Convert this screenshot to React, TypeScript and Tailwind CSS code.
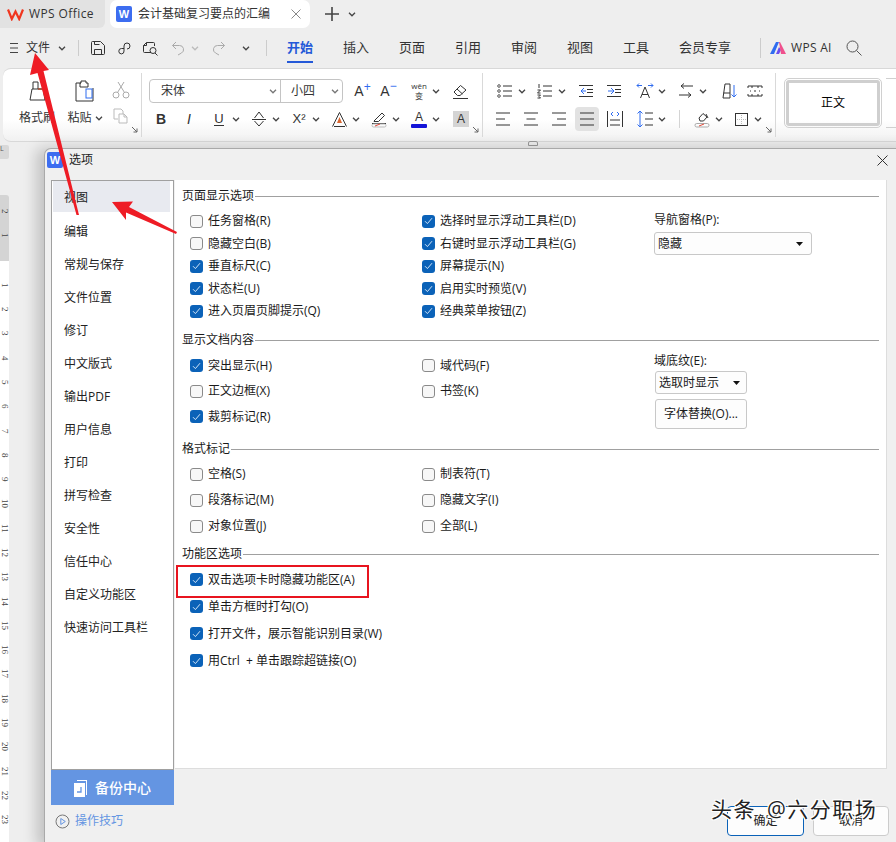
import React from "react";

const FONT = "font-['Open_Sans','Noto_Sans_CJK_SC',sans-serif]";

function Ic({ children, s = 20, vb = 20, c = "#333" }: { children: React.ReactNode; s?: number; vb?: number; c?: string }) {
  return (
    <svg width={s} height={s} viewBox={`0 0 ${vb} ${vb}`} fill="none" stroke={c} strokeWidth={1} className="shrink-0">
      {children}
    </svg>
  );
}

function Chev({ c = "#444" }: { c?: string }) {
  return (
    <svg width="8" height="5" viewBox="0 0 8 5" fill="none" stroke={c} strokeWidth={1.3} className="shrink-0">
      <path d="M1 .8 4 3.8 7 .8" />
    </svg>
  );
}

function Launcher() {
  return (
    <svg width="7" height="7" viewBox="0 0 7 7" fill="none" stroke="#666" className="absolute right-[3px] bottom-[4px]">
      <path d="M1 1 6 6M6 2.5V6H2.5" />
    </svg>
  );
}

function Slot({ children, className = "w-[24px]" }: { children: React.ReactNode; className?: string }) {
  return <div className={`h-[24px] flex items-center justify-center shrink-0 ${className}`}>{children}</div>;
}

function Drop({ children, className = "" }: { children: React.ReactNode; className?: string }) {
  return (
    <div className={`h-[24px] w-[34px] flex items-center shrink-0 ${className}`}>
      <div className="w-[24px] flex justify-center">{children}</div>
      <div className="w-[10px] flex justify-center"><Chev /></div>
    </div>
  );
}

const L = ({ d, c = "#333" }: { d: string; c?: string }) => <path d={d} stroke={c} />;

const AlignIcon = ({ d }: { d: string }) => <Ic s={18} vb={18}><L d={d} /></Ic>;

function Tab({ label, active = false, className = "" }: { label: string; active?: boolean; className?: string }) {
  return (
    <div className={`relative h-[28px] flex items-center justify-center text-[13px] ${active ? "text-[#2459d8] font-semibold" : "text-[#333]"} ${className}`}>
      {label}
      {active && <div className="absolute left-[15px] right-[15px] bottom-[-1px] h-[2px] bg-[#2459d8]" />}
    </div>
  );
}

function Check({ on, label }: { on: boolean; label: string }) {
  return (
    <div className="flex items-center h-full">
      {on ? (
        <div className="w-[13px] h-[13px] rounded-[3px] bg-[#0b62b8] flex items-center justify-center shrink-0">
          <svg width="9" height="8" viewBox="0 0 9 8" fill="none" stroke="#cfe3f7" strokeWidth={1}><path d="M1 4.2 3.4 6.6 8 1.2" /></svg>
        </div>
      ) : (
        <div className="w-[13px] h-[13px] rounded-[3px] bg-[#f7f7f7] border border-[#8a8a8a] shrink-0" />
      )}
      <span className="ml-[5px] text-[12px] text-[#1a1a1a] whitespace-nowrap leading-none">{label}</span>
    </div>
  );
}

function Heading({ title }: { title: string }) {
  return (
    <div className="flex items-center h-[16px] pl-[7px] pr-[7px]">
      <span className="text-[12px] text-[#1a1a1a] leading-none whitespace-nowrap">{title}</span>
      <div className="flex-1 h-px bg-[#a0a0a0] ml-[1px]" />
    </div>
  );
}

const SIDE = ["视图", "编辑", "常规与保存", "文件位置", "修订", "中文版式", "输出PDF", "用户信息", "打印", "拼写检查", "安全性", "信任中心", "自定义功能区", "快速访问工具栏"];

function Ruler() {
  const nums = Array.from({ length: 23 }, (_, i) => i + 1);
  return (
    <div className="w-[9px] h-full flex flex-col shrink-0">
      <div className="h-[14px] mt-[3px] bg-[#d8d8d8] rounded-r-[2px] text-[7px] text-[#555] leading-none">L</div>
      <div className="h-[36px]" />
      <div className="h-[66px] bg-[#d4d4d4] rounded-tr-[3px] flex flex-col items-center pt-[14px] gap-[19px] text-[9px] text-[#444] font-['Liberation_Serif',serif]">
        <span className="leading-none [writing-mode:vertical-rl]">2</span>
        <span className="leading-none [writing-mode:vertical-rl]">1</span>
      </div>
      <div className="flex-1 bg-white pt-[12px] overflow-hidden">
        {nums.map((n) => (
          <div key={n} className="h-[24.3px] flex justify-center text-[9px] text-[#444] font-['Liberation_Serif',serif] leading-none [writing-mode:vertical-rl]">
            {n}
          </div>
        ))}
      </div>
    </div>
  );
}

export default function App() {
  return (
    <div className={`relative w-[896px] h-[842px] overflow-hidden bg-[#eeeeee] flex flex-col ${FONT}`}>
      {/* Title tabs */}
      <div className="h-[28px] flex items-center shrink-0">
        <div className="w-[105px] h-full bg-[#e2e2e2] rounded-br-[6px] flex items-center pl-[7px]">
          <svg width="17" height="13" viewBox="0 0 17 13" fill="none" stroke="#f0361f" strokeWidth={2.2}>
            <path d="M1 1.5 4.8 11 8.5 3.5 12.2 11 16 1.5" />
          </svg>
          <span className="ml-[5px] text-[12px] text-[#333] tracking-[.4px]">WPS Office</span>
        </div>
        <div className="ml-[5px] w-[200px] h-full bg-white rounded-[7px] flex items-center pl-[6px]">
          <div className="w-[16px] h-[16px] rounded-[2px] bg-[#3d6df0] text-white text-[11px] font-bold flex items-center justify-center leading-none font-['Liberation_Sans',sans-serif]">W</div>
          <span className="ml-[6px] text-[12px] text-[#333] whitespace-nowrap">会计基础复习要点的汇编</span>
          <svg width="10" height="10" viewBox="0 0 10 10" stroke="#888" className="ml-[21px]"><path d="M.5.5l9 9M9.5.5l-9 9" /></svg>
        </div>
        <svg width="14" height="14" viewBox="0 0 14 14" stroke="#444" strokeWidth={1.6} className="ml-[15px]"><path d="M7 0v14M0 7h14" /></svg>
        <div className="ml-[9px]"><Chev /></div>
      </div>

      {/* Menu row */}
      <div className="h-[40px] flex items-center shrink-0 text-[#333]">
        <svg width="8" height="10" viewBox="0 0 8 10" stroke="#444" className="ml-[10px]"><path d="M0 .5h8M0 5h8M0 9.5h8" /></svg>
        <span className="ml-[8px] text-[12px]">文件</span>
        <div className="ml-[8px]"><Chev /></div>
        <div className="ml-[12px] w-px h-[16px] bg-[#ccc]" />
        <div className="ml-[11px]">
          <Ic s={16} vb={16}><L d="M1.5 2.5a1 1 0 0 1 1-1h8l4 4v8a1 1 0 0 1-1 1h-11a1 1 0 0 1-1-1zM4.5 14.5v-5h7v5M4.5 1.5v3h5" /></Ic>
        </div>
        <div className="ml-[11px]">
          <Ic s={15} vb={15}><L d="M7 7.5H4.5a2.7 2.7 0 1 0 0 5.4A2.7 2.7 0 0 0 7 10V5a3 3 0 1 1 3 3" /></Ic>
        </div>
        <div className="ml-[10px]">
          <Ic s={17} vb={17}><L d="M9 12.5H2.5a1 1 0 0 1-1-1v-6l3-3h7a1 1 0 0 1 1 1V6M1.5 5.5h3v-3" /><circle cx="11" cy="10.5" r="3" stroke="#333" /><L d="m13 13 2.5 2.5" /></Ic>
        </div>
        <div className="ml-[12px]">
          <Ic s={15} vb={15} c="#aaa"><path d="M5 1 1.5 4.5 5 8M1.5 4.5h7a4 4 0 0 1 2 7.5L7 14" /></Ic>
        </div>
        <div className="ml-[5px]"><Chev c="#bbb" /></div>
        <div className="ml-[12px]">
          <Ic s={15} vb={15} c="#aaa"><path d="M10 1l3.500 3.500L10 8M13.500 4.500h-7a4 4 0 0 0-2 7.500L8 14" /></Ic>
        </div>
        <div className="ml-[16px]"><Chev /></div>
        <div className="ml-[16px] w-px h-[16px] bg-[#ccc]" />
        <div className="ml-[5px] flex">
          <Tab label="开始" active className="w-[56px]" />
          <Tab label="插入" className="w-[56px]" />
          <Tab label="页面" className="w-[56px]" />
          <Tab label="引用" className="w-[56px]" />
          <Tab label="审阅" className="w-[56px]" />
          <Tab label="视图" className="w-[56px]" />
          <Tab label="工具" className="w-[56px]" />
          <Tab label="会员专享" className="w-[82px]" />
        </div>
        <div className="ml-[14px] w-px h-[20px] bg-[#ccc]" />
        <svg width="16" height="12" viewBox="0 0 16 12" className="ml-[9px]">
          <path d="M0 12 6 0h3L4 12z" fill="#2f6cf0" />
          <path d="M6 12l3-7 2 3-2 4z" fill="#6a4cf0" />
          <path d="M9 0h1l6 12h-5z" fill="#f0508c" />
        </svg>
        <span className="ml-[5px] text-[12px] text-[#333] tracking-[.3px] whitespace-nowrap">WPS AI</span>
        <svg width="16" height="16" viewBox="0 0 16 16" fill="none" stroke="#555" className="ml-[14px]"><circle cx="6.500" cy="6.500" r="5.500" /><path d="m10.500 10.500 5 5" /></svg>
      </div>

      {/* Ribbon */}
      <div className="ml-[3px] h-[74px] shrink-0 flex bg-gradient-to-b from-white from-70% to-[#f1f1f1] rounded-tl-[8px] rounded-bl-[8px] border-t border-b border-[#d8d8d8] text-[#333]">
        <div className="relative w-[139px] shrink-0 my-[4px] border-r border-[#d9d9d9] flex text-[12px] leading-none">
          <div className="ml-[16px] w-[36px] flex flex-col items-center pt-[6px]">
            <Ic s={24} vb={24}>
              <L d="M8 3h5v7h5l2 11H5l2-11h1zM8 10h10" />
              <path d="M13 10h6" stroke="#e8562a" />
            </Ic>
            <span className="mt-[9px] whitespace-nowrap">格式刷</span>
          </div>
          <div className="ml-[13px] w-[34px] flex flex-col items-center pt-[6px]">
            <Ic s={24} vb={24}>
              <L d="M8 4H3v18h17V9M8 4V2h5v2h2v4H7V4z" />
              <rect x="13" y="10" width="6" height="9" stroke="#2f6cf0" />
            </Ic>
            <div className="mt-[9px] flex items-center whitespace-nowrap">粘贴<span className="ml-[3px]"><Chev /></span></div>
          </div>
          <div className="ml-[9px] w-[20px] flex flex-col items-center pt-[8px]">
            <Ic s={18} vb={18} c="#aaa"><circle cx="4" cy="14" r="3" /><circle cx="14" cy="14" r="3" /><path d="M5.500 11.500 12 1M12.500 11.500 6 1" /></Ic>
            <div className="mt-[9px]">
              <Ic s={16} vb={16} c="#bbb"><path d="M1 1h7l2 2v3M1 1v10h4M6 6h5l3 3v6H6zM11 6v3h3" /></Ic>
            </div>
          </div>
          <Launcher />
        </div>

        <div className="relative w-[341px] shrink-0 my-[4px] border-r border-[#d9d9d9] pl-[7px] pt-[6px]">
          <div className="flex items-center h-[24px]">
            <div className="w-[194px] h-[24px] rounded-[4px] border border-[#c4c4c4] flex items-center shrink-0 text-[12px]">
              <div className="w-[131px] h-full flex items-center pl-[11px] pr-[3px] justify-between border-r border-[#c4c4c4]">
                <span>宋体</span>
                <Chev c="#777" />
              </div>
              <div className="flex-1 flex items-center pl-[10px] pr-[3px] justify-between">
                <span>小四</span>
                <Chev c="#777" />
              </div>
            </div>
            <Slot className="w-[24px] ml-[4px]"><span className="text-[14px] leading-none relative font-['Liberation_Sans',sans-serif]">A<span className="absolute -right-[7px] -top-[3px] text-[12px] text-[#2f6cf0] leading-none">+</span></span></Slot>
            <Slot className="w-[24px] ml-[2px]"><span className="text-[14px] leading-none relative font-['Liberation_Sans',sans-serif]">A<span className="absolute -right-[7px] -top-[4px] text-[12px] text-[#2f6cf0] leading-none">−</span></span></Slot>
            <Drop className="ml-[10px]"><span className="text-[8px] leading-[10px] text-center">wěn<br />变</span></Drop>
            <Slot className="w-[24px] ml-[7px]">
              <Ic s={17} vb={17}><L d="M2 9 8.500 2.500 14 7 8 12.500H5.500zM5 6l5.500 5M1 15.500h15" /></Ic>
            </Slot>
          </div>
          <div className="flex items-center h-[24px] mt-[4px] text-[14px]">
            <Slot><b className="font-['Liberation_Sans',sans-serif]">B</b></Slot>
            <Slot className="w-[24px] ml-[4px]"><i className="font-['Liberation_Sans',sans-serif]">I</i></Slot>
            <Drop className="ml-[6px]"><span className="border-b border-[#333] leading-[13px] text-[13px] font-['Liberation_Sans',sans-serif]">U</span></Drop>
            <Drop className="ml-[6px]"><Ic s={16} vb={16}><L d="M3.500 7 8 1l4.500 6M1 8.500h14M3.500 10l4.500 5 4.500-5" /></Ic></Drop>
            <Drop className="ml-[6px]"><span className="text-[13px] font-['Liberation_Sans',sans-serif]">X²</span></Drop>
            <Drop className="ml-[6px]">
              <Ic s={17} vb={17}><L d="M1.500 15.500 8.500 1.500l7 14M3 15.500h11" /><path d="M8.500 6l2.500 6H6z" fill="#d9652e" stroke="none" /></Ic>
            </Drop>
            <Drop className="ml-[6px]">
              <Ic s={17} vb={17}><L d="M3 10 11 2l2.500 2.500-6 6H3zM1 12.500h14" /><rect x="1" y="13" width="14" height="3" rx="1.500" stroke="#bbb" /><path d="M4 15l5-2" stroke="#e24a3a" /></Ic>
            </Drop>
            <Drop className="ml-[6px]">
              <div className="flex flex-col items-center leading-none">
                <span className="text-[12px] font-['Liberation_Sans',sans-serif]">A</span>
                <div className="w-[16px] h-[4px] bg-[#1414d8] mt-[1px] rounded-[1px]" />
              </div>
            </Drop>
            <div className="w-[16px] h-[16px] ml-[12px] bg-[#d4d4d4] flex items-center justify-center text-[12px] font-['Liberation_Sans',sans-serif]">A</div>
          </div>
          <Launcher />
        </div>

        <div className="relative w-[293px] shrink-0 my-[4px] border-r border-[#d9d9d9] pl-[10px] pt-[6px]">
          <div className="flex items-center h-[24px]">
            <Drop><Ic s={16} vb={16}><L d="M6 3h9M6 8h9M6 13h9" /><circle cx="2" cy="3" r="1.300" stroke="#555" /><circle cx="2" cy="8" r="1.300" stroke="#555" /><circle cx="2" cy="13" r="1.300" stroke="#555" /></Ic></Drop>
            <Drop className="ml-[6px]"><Ic s={16} vb={16}><L d="M6 3h9M6 8h9M6 13h9M2 1v4M.5 7h3l-3 3h3M.5 12h3l-1.500 1.500 1.500 1.500h-3" /></Ic></Drop>
            <Slot className="w-[24px] ml-[7px]"><Ic s={16} vb={16}><L d="M1 2.500h14M1 13.500h14M9 6.500h6M9 9.500h6" /><path d="M6 5 3 8l3 3M3 8h5" stroke="#2f6cf0" /></Ic></Slot>
            <Slot className="w-[24px] ml-[4px]"><Ic s={16} vb={16}><L d="M1 2.500h14M1 13.500h14M9 6.500h6M9 9.500h6" /><path d="m5 5 3 3-3 3M8 8H2" stroke="#2f6cf0" /></Ic></Slot>
            <Drop className="ml-[7px]">
              <Ic s={18} vb={18}><L d="M4.500 16 9 5l4.500 11M6 12.500h6" /><path d="M1 3.500h5M1 3.500 3 1.500M1 3.500l2 2M12 3.500h5M17 3.500l-2-2M17 3.500l-2 2" stroke="#2f6cf0" /></Ic>
            </Drop>
            <Drop className="ml-[7px]">
              <Ic s={16} vb={16}><L d="M15 3H3M3 3l3-2.500M3 3l3 2.500M1 12h12M13 12l-3-2.500M13 12l-3 2.500" /></Ic>
            </Drop>
            <Slot className="w-[24px] ml-[9px]">
              <Ic s={18} vb={18}><L d="M3 16 5 2h5v14zM3.500 11h6.500" /><path d="M14 3v12M11.500 12.500 14 15l2.500-2.500" stroke="#2f6cf0" /></Ic>
            </Slot>
            <Slot className="w-[24px] ml-[2px]">
              <Ic s={16} vb={16}><L d="M1 3h14M1 13h14M1 3v2M1 11v2M15 3v2M15 11v2M5 3v2M5 11v2M11 3v2M11 11v2M3 8h1M7 8h2M12 8h1" /></Ic>
            </Slot>
          </div>
          <div className="flex items-center h-[24px] mt-[4px] -ml-[2px]">
            <Slot><AlignIcon d="M2 3h14M2 9h9M2 15h14" /></Slot>
            <Slot className="w-[24px] ml-[4px]"><AlignIcon d="M2 3h14M4.500 9h9M2 15h14" /></Slot>
            <Slot className="w-[24px] ml-[4px]"><AlignIcon d="M2 3h14M7 9h9M2 15h14" /></Slot>
            <Slot className="w-[24px] ml-[4px] bg-[#e2e2e2] rounded-[4px]"><AlignIcon d="M2 3h14M2 9h14M2 15h14" /></Slot>
            <Slot className="w-[24px] ml-[4px]">
              <Ic s={18} vb={18}><L d="M1.500 1v16M16.500 1v16M4 10h10M4 15h10" /><path d="M7 2 5 4l2 2M11 2l2 2-2 2" stroke="#2f6cf0" /></Ic>
            </Slot>
            <Drop className="ml-[6px]">
              <Ic s={18} vb={18}><L d="M9 3h8M9 9h8M9 15h8" /><path d="M4 1v16M1.500 3.500 4 1l2.500 2.500M1.500 14.500 4 17l2.500-2.500" stroke="#2f6cf0" /></Ic>
            </Drop>
            <div className="ml-[12px] w-px h-[18px] bg-[#d4d4d4]" />
            <Drop className="ml-[10px]">
              <Ic s={17} vb={17}><L d="M5 7 9 2.500l4 3.500-3.500 4H6zM12 3l2 4" /><rect x="1" y="12.500" width="14" height="3.500" rx="1.700" stroke="#aaa" /><path d="M5 15l5-2" stroke="#e24a3a" /></Ic>
            </Drop>
            <Drop className="ml-[5px]">
              <Ic s={15} vb={15}><rect x="1.500" y="1.500" width="12" height="12" stroke="#333" /><path d="M7.500 3v9M3 7.500h9" stroke="#bbb" strokeDasharray="1 1" /></Ic>
            </Drop>
          </div>
          <Launcher />
        </div>

        <div className="ml-[8px] flex-1 pt-[9px] pl-px flex">
          <div className="w-[98px] h-[50px] border border-[#d0d0d0] rounded-[5px] p-px shrink-0 -ml-px">
            <div className="h-full border-[3px] border-[#cfcfcf] rounded-[3px] flex items-center justify-center text-[12px] text-black">正文</div>
          </div>
          <div className="ml-[4px] flex-1 h-[50px] border-t border-b border-[#d0d0d0]" />
        </div>
      </div>

      {/* Document area */}
      <div className="flex-1 relative min-h-0">
        <div className="absolute left-[528px] -top-[1px] w-[10px] h-[5px] border border-[#999] rounded-t-[2px] bg-[#eee]" />
        <div className="h-full"><Ruler /></div>
      </div>

      {/* Dialog */}
      <div className="absolute left-[44px] top-[148px] w-[870px] h-[700px] bg-[#f0f0f0] rounded-tl-[7px] rounded-bl-[7px] border-l border-t border-[#a9a9a9] shadow-[-8px_0_14px_rgba(0,0,0,0.18)] flex flex-col">
        <div className="h-[31px] flex items-start pt-[3px] shrink-0">
          <div className="ml-[2px] w-[16px] h-[16px] rounded-[2px] bg-[#3d6df0] text-white text-[11px] font-bold flex items-center justify-center leading-none font-['Liberation_Sans',sans-serif]">W</div>
          <span className="ml-[6px] text-[12px] leading-[16px] text-[#222]">选项</span>
          <svg width="11" height="11" viewBox="0 0 11 11" stroke="#333" className="absolute left-[832px] top-[6px]"><path d="M.5.5l10 10M10.500.5l-10 10" /></svg>
        </div>
        <div className="flex pl-[6px]">
          {/* Sidebar */}
          <div className="w-[123px] shrink-0">
            <div className="h-[590px] bg-white border border-[#a0a0a0] px-px">
              {SIDE.map((s, i) => (
                <div key={s} className={`flex items-center pl-[11px] pt-[2px] text-[12px] text-[#222] ${i === 0 ? "bg-[#e8eaf0] h-[31px] mb-[2px] mr-[2px]" : "h-[33px]"}`}>{s}</div>
              ))}
            </div>
            <div className="h-[35px] bg-[#6495e2] flex items-center justify-center text-white text-[14px] font-medium">
              <svg width="15" height="18" viewBox="0 0 15 18" className="mr-[6px]" fill="#fff"><path d="M0 4h11v14H0zM12 2v14h1V1H3v1z" /><path d="M7 8v5H3" stroke="#6495e2" strokeWidth={1.300} fill="none" /></svg>
              备份中心
            </div>
            <div className="h-[32px] flex items-center pl-[4px]">
              <svg width="15" height="15" viewBox="0 0 15 15" fill="none"><circle cx="7.500" cy="7.500" r="6.500" stroke="#777" /><path d="M5.800 4.500v6l4.500-3z" stroke="#6495e2" /></svg>
              <span className="ml-[5px] text-[12px] text-[#6495e2]">操作技巧</span>
            </div>
          </div>

          {/* Panel */}
          <div className="ml-px w-[712px] h-[589px] bg-white border-b border-r border-[#dddddd] pt-[8px] shrink-0">
            <section className="h-[144px]">
              <Heading title="页面显示选项" />
              <div className="mt-[6px] pl-[15px] grid grid-cols-[232px_232px_1fr] grid-rows-[repeat(5,22.5px)]">
                <Check on={false} label="任务窗格(R)" />
                <Check on label="选择时显示浮动工具栏(D)" />
                <div className="row-span-3 mt-[4px] text-[12px] text-[#1a1a1a] leading-none">
                  <div className="h-[15px]">导航窗格(P):</div>
                  <div className="mt-[3px] w-[158px] h-[23px] rounded-[3px] border border-[#c8c8c8] bg-[#fdfdfd] flex items-center justify-between pl-[3px] pr-[8px]">
                    <span>隐藏</span>
                    <svg width="7" height="4" viewBox="0 0 7 4" fill="#111"><path d="M0 0h7L3.500 4z" /></svg>
                  </div>
                </div>
                <Check on={false} label="隐藏空白(B)" />
                <Check on label="右键时显示浮动工具栏(G)" />
                <Check on label="垂直标尺(C)" />
                <Check on label="屏幕提示(N)" />
                <Check on label="状态栏(U)" />
                <Check on label="启用实时预览(V)" />
                <div />
                <Check on label="进入页眉页脚提示(Q)" />
                <Check on label="经典菜单按钮(Z)" />
              </div>
            </section>

            <section className="h-[109px]">
              <Heading title="显示文档内容" />
              <div className="mt-[5px] pl-[15px] grid grid-cols-[232px_232px_1fr] grid-rows-[repeat(3,25.5px)]">
                <Check on label="突出显示(H)" />
                <Check on={false} label="域代码(F)" />
                <div className="row-span-3 mt-[2px] text-[12px] text-[#1a1a1a] leading-none">
                  <div className="h-[15px]">域底纹(E):</div>
                  <div className="mt-px ml-px w-[92px] h-[23px] rounded-[3px] border border-[#c8c8c8] bg-[#fdfdfd] flex items-center justify-between pl-[3px] pr-[6px]">
                    <span>选取时显示</span>
                    <svg width="7" height="4" viewBox="0 0 7 4" fill="#111"><path d="M0 0h7L3.500 4z" /></svg>
                  </div>
                  <div className="mt-[5px] ml-px w-[92px] h-[30px] rounded-[3px] border border-[#c8c8c8] bg-[#fdfdfd] flex items-center justify-center">字体替换(O)...</div>
                </div>
                <Check on={false} label="正文边框(X)" />
                <Check on={false} label="书签(K)" />
                <Check on label="裁剪标记(R)" />
              </div>
            </section>

            <section className="h-[105px]">
              <Heading title="格式标记" />
              <div className="mt-[4px] pl-[15px] grid grid-cols-[232px_232px] grid-rows-[repeat(3,26px)]">
                <Check on={false} label="空格(S)" />
                <Check on={false} label="制表符(T)" />
                <Check on={false} label="段落标记(M)" />
                <Check on={false} label="隐藏文字(I)" />
                <Check on={false} label="对象位置(J)" />
                <Check on={false} label="全部(L)" />
              </div>
            </section>

            <section className="relative">
              <Heading title="功能区选项" />
              <div className="mt-[4px] pl-[15px] grid grid-rows-[repeat(4,27px)]">
                <Check on label="双击选项卡时隐藏功能区(A)" />
                <Check on label="单击方框时打勾(O)" />
                <Check on label="打开文件，展示智能识别目录(W)" />
                <Check on label={"用Ctrl\u00a0\u00a0+\u00a0单击跟踪超链接(O)"} />
              </div>
              <div className="absolute left-[1px] top-[19px] w-[193px] h-[33px] border-2 border-[#e8141f]" />
            </section>
          </div>
        </div>
        {/* Buttons */}
        <div className="absolute left-[682px] top-[657px] flex gap-[9px] text-[12px] text-[#222]">
          <div className="w-[77px] h-[30px] rounded-[4px] border border-[#0b62b8] bg-[#fdfdfd] flex items-center justify-center">确定</div>
          <div className="w-[76px] h-[30px] rounded-[4px] border border-[#cccccc] bg-[#fdfdfd] flex items-center justify-center">取消</div>
        </div>
      </div>

      {/* Annotation arrows */}
      <svg width="896" height="842" viewBox="0 0 896 842" className="absolute left-0 top-0 pointer-events-none">
        <path d="M35 53 49 70 43.500 71 79 215 76.500 215 37.500 73 30 75z" fill="#ee1c25" />
        <path d="M112 202 133 201.500 129 207 177 232 176 234 126 212.500 126 220z" fill="#ee1c25" />
      </svg>

      {/* Watermark */}
      <div className="absolute left-[711px] top-[794px] text-[21px] leading-[30px] tracking-[1.5px] [word-spacing:4px] text-[#222] whitespace-nowrap [text-shadow:1px_1px_0_#fff,-1px_-1px_0_#fff,1px_-1px_0_#fff,-1px_1px_0_#fff]">
        头条 @六分职场
      </div>
    </div>
  );
}
